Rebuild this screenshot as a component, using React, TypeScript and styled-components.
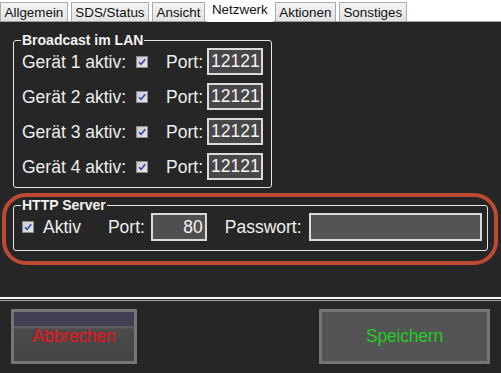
import React from 'react';
import styled, { createGlobalStyle } from 'styled-components';

const GlobalStyle = createGlobalStyle`
  html, body {
    margin: 0;
    padding: 0;
    background: #262626;
  }
  body {
    font-family: 'Liberation Sans', Arial, sans-serif;
  }
  #root {
    width: 501px;
    height: 373px;
    overflow: hidden;
  }
`;

const Window = styled.div`
  display: flex;
  flex-direction: column;
  width: 501px;
  height: 373px;
  background: #262626;
  color: #f0f0f0;
`;

const TabStrip = styled.div`
  display: flex;
  align-items: flex-end;
  gap: 3px;
  height: 22px;
  box-sizing: border-box;
  background: #fff;
  border-bottom: 1px solid #a0a0a0;
`;

const Tab = styled.div<{ $active?: boolean }>`
  position: relative;
  box-sizing: border-box;
  font-size: 13.4px;
  color: #111;
  white-space: nowrap;
  ${(p) =>
    p.$active
      ? `
    height: 22px;
    margin: 0 -1px -1px;
    padding: 0 5px 3px;
    line-height: 19px;
    background: #fff;
    z-index: 1;
  `
      : `
    height: 19px;
    padding: 0 3.5px;
    line-height: 19px;
    border: 1px solid #acacac;
    border-bottom: none;
    background: linear-gradient(#f4f4f4, #e2e2e2);
  `}
`;

const Content = styled.div`
  display: flex;
  flex-direction: column;
  align-items: flex-start;
  padding: 0 3px 0 2px;
`;

const Group = styled.fieldset<{ $width?: number }>`
  box-sizing: border-box;
  margin: 0;
  min-width: 0;
  border: 1px solid #e4e4e4;
  border-radius: 3px;
  ${(p) => (p.$width ? `width: ${p.$width}px;` : 'width: 100%;')}
`;

const BroadcastGroup = styled(Group)`
  margin: 10px 0 0 11px;
  padding: 0 7px 7px 8px;
`;

const HttpGroup = styled(Group)`
  padding: 0 5px 9px 8px;
`;

const Legend = styled.legend`
  margin-left: -1px;
  padding: 0 1px;
  font-size: 14px;
  font-weight: bold;
  line-height: 16px;
  color: #f2f2f2;
`;

const Highlight = styled.div`
  box-sizing: border-box;
  width: 496px;
  margin-top: 5px;
  padding: 0 6px 10px 7px;
  border: 4px solid #bd4a33;
  border-radius: 24px;
`;

const Rows = styled.div`
  display: flex;
  flex-direction: column;
  gap: 8px;
`;

const Row = styled.div`
  display: flex;
  align-items: center;
`;

const Label = styled.span<{ $ml?: number }>`
  font-size: 17.5px;
  line-height: 20px;
  color: #eeeeee;
  white-space: nowrap;
  margin-left: ${(p) => p.$ml ?? 0}px;
`;

const Box = styled.span<{ $ml?: number }>`
  display: inline-flex;
  flex: none;
  width: 12px;
  height: 12px;
  box-sizing: border-box;
  margin-left: ${(p) => p.$ml ?? 0}px;
  border: 1px solid #8c8c8c;
  background: linear-gradient(135deg, #c9c9ce, #e6e6ea);
`;

const Field = styled.div<{ $w: number; $h: number; $ml?: number; $right?: boolean; $bg?: string }>`
  box-sizing: border-box;
  width: ${(p) => p.$w}px;
  height: ${(p) => p.$h}px;
  margin-left: ${(p) => p.$ml ?? 0}px;
  padding: 0 2px;
  border: 2px solid #dadada;
  background: ${(p) => p.$bg ?? '#474747'};
  font-size: 17.5px;
  line-height: ${(p) => p.$h - 4}px;
  color: #f4f4f4;
  text-align: ${(p) => (p.$right ? 'right' : 'left')};
  overflow: hidden;
`;

const Divider = styled.div`
  width: 100%;
  height: 1px;
  margin-top: 32px;
  border-top: 2px solid #f4f4f4;
  border-bottom: 1px solid #a4a4a4;
`;

const Footer = styled.div`
  display: flex;
  justify-content: space-between;
  padding: 8px 11px 0 11px;
`;

const Button = styled.div<{ $w: number; $color: string; $bg: string }>`
  box-sizing: border-box;
  width: ${(p) => p.$w}px;
  height: 55px;
  border: 3px solid #767676;
  background: ${(p) => p.$bg};
  color: ${(p) => p.$color};
  display: flex;
  align-items: center;
  justify-content: center;
  font-size: 17.5px;
  letter-spacing: -0.2px;
`;

const Check = ({ ml }: { ml?: number }) => (
  <Box $ml={ml}>
    <svg width="10" height="10" viewBox="0 0 10 10">
      <path d="M2 5.2 L4.1 7.4 L8.2 2.2" fill="none" stroke="#3644a6" strokeWidth="1.6" />
    </svg>
  </Box>
);

const tabs = ['Allgemein', 'SDS/Status', 'Ansicht', 'Netzwerk', 'Aktionen', 'Sonstiges'];
const devices = [1, 2, 3, 4];

export default function App() {
  return (
    <>
      <GlobalStyle />
      <Window>
        <TabStrip>
          {tabs.map((t) => (
            <Tab key={t} $active={t === 'Netzwerk'}>
              {t}
            </Tab>
          ))}
        </TabStrip>
        <Content>
          <BroadcastGroup $width={259}>
            <Legend>Broadcast im LAN</Legend>
            <Rows>
              {devices.map((n) => (
                <Row key={n}>
                  <Label>Gerät {n} aktiv:</Label>
                  <Check ml={10} />
                  <Label $ml={18}>Port:</Label>
                  <Field $w={56} $h={27} $ml={4}>
                    12121
                  </Field>
                </Row>
              ))}
            </Rows>
          </BroadcastGroup>
          <Highlight>
            <HttpGroup>
              <Legend>HTTP Server</Legend>
              <Row>
                <Check />
                <Label $ml={9}>Aktiv</Label>
                <Label $ml={27}>Port:</Label>
                <Field $w={56} $h={28} $ml={6} $right $bg="#4f4f4f">
                  80
                </Field>
                <Label $ml={18}>Passwort:</Label>
                <Field $w={174} $h={28} $ml={7} $bg="#545454" />
              </Row>
            </HttpGroup>
          </Highlight>
        </Content>
        <Divider />
        <Footer>
          <Button
            $w={126}
            $color="#e8141c"
            $bg="linear-gradient(180deg, #413f54 0, #413f54 14px, #5c5c60 14px, #5c5c60 16px, #4c4a4a 17px, #454343 100%)"
          >
            Abbrechen
          </Button>
          <Button $w={171} $color="#22cc22" $bg="#545454">
            Speichern
          </Button>
        </Footer>
      </Window>
    </>
  );
}
